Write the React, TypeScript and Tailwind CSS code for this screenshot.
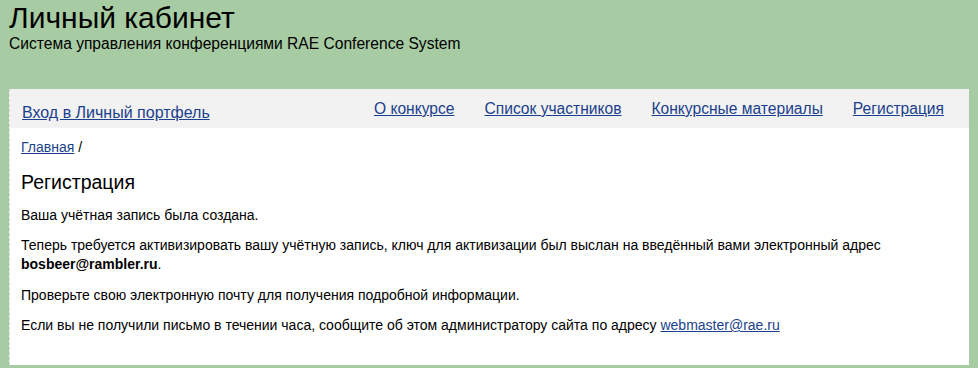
export default function App() {
  const link = "text-[#1a3f8c] underline";
  return (
    <div className="min-h-[368px] bg-[#a7cba3] px-[9px] pb-[3px] pt-[1px] text-black" style={{ fontFamily: '"Liberation Sans", Arial, sans-serif' }}>
      <div className="h-[88px]">
        <h1 className="text-[30px] leading-[34px]">Личный кабинет</h1>
        <div className="text-[15.6px] leading-[18px]">Система управления конференциями RAE Conference System</div>
      </div>
      <div className="w-[960px] border-l border-dashed border-[#d8d8d8] bg-white">
        <div className="flex h-[39px] items-start bg-[#f2f2f2]">
          <a className={`${link} ml-[12px] mt-[14px] text-[16px] leading-[20px]`} href="#">Вход в Личный портфель</a>
          <div className="ml-auto mr-[25px] mt-[10px] flex gap-[30px] text-[15.6px] leading-[20px]">
            <a className={link} href="#">О конкурсе</a>
            <a className={link} href="#">Список участников</a>
            <a className={link} href="#">Конкурсные материалы</a>
            <a className={link} href="#">Регистрация</a>
          </div>
        </div>
        <div className="px-[11px] pb-[30px] pt-[10px] text-[14px] leading-[19px]">
          <div><a className={link} href="#">Главная</a> /</div>
          <h2 className="mt-[13px] text-[19.5px] leading-[24px]">Регистрация</h2>
          <p className="mt-[12px]">Ваша учётная запись была создана.</p>
          <p className="mt-[11px]">Теперь требуется активизировать вашу учётную запись, ключ для активизации был выслан на введённый вами электронный адрес <b>bosbeer@rambler.ru</b>.</p>
          <p className="mt-[12px]">Проверьте свою электронную почту для получения подробной информации.</p>
          <p className="mt-[11px]">Если вы не получили письмо в течении часа, сообщите об этом администратору сайта по адресу <a className={link} href="#">webmaster@rae.ru</a></p>
        </div>
      </div>
    </div>
  );
}
